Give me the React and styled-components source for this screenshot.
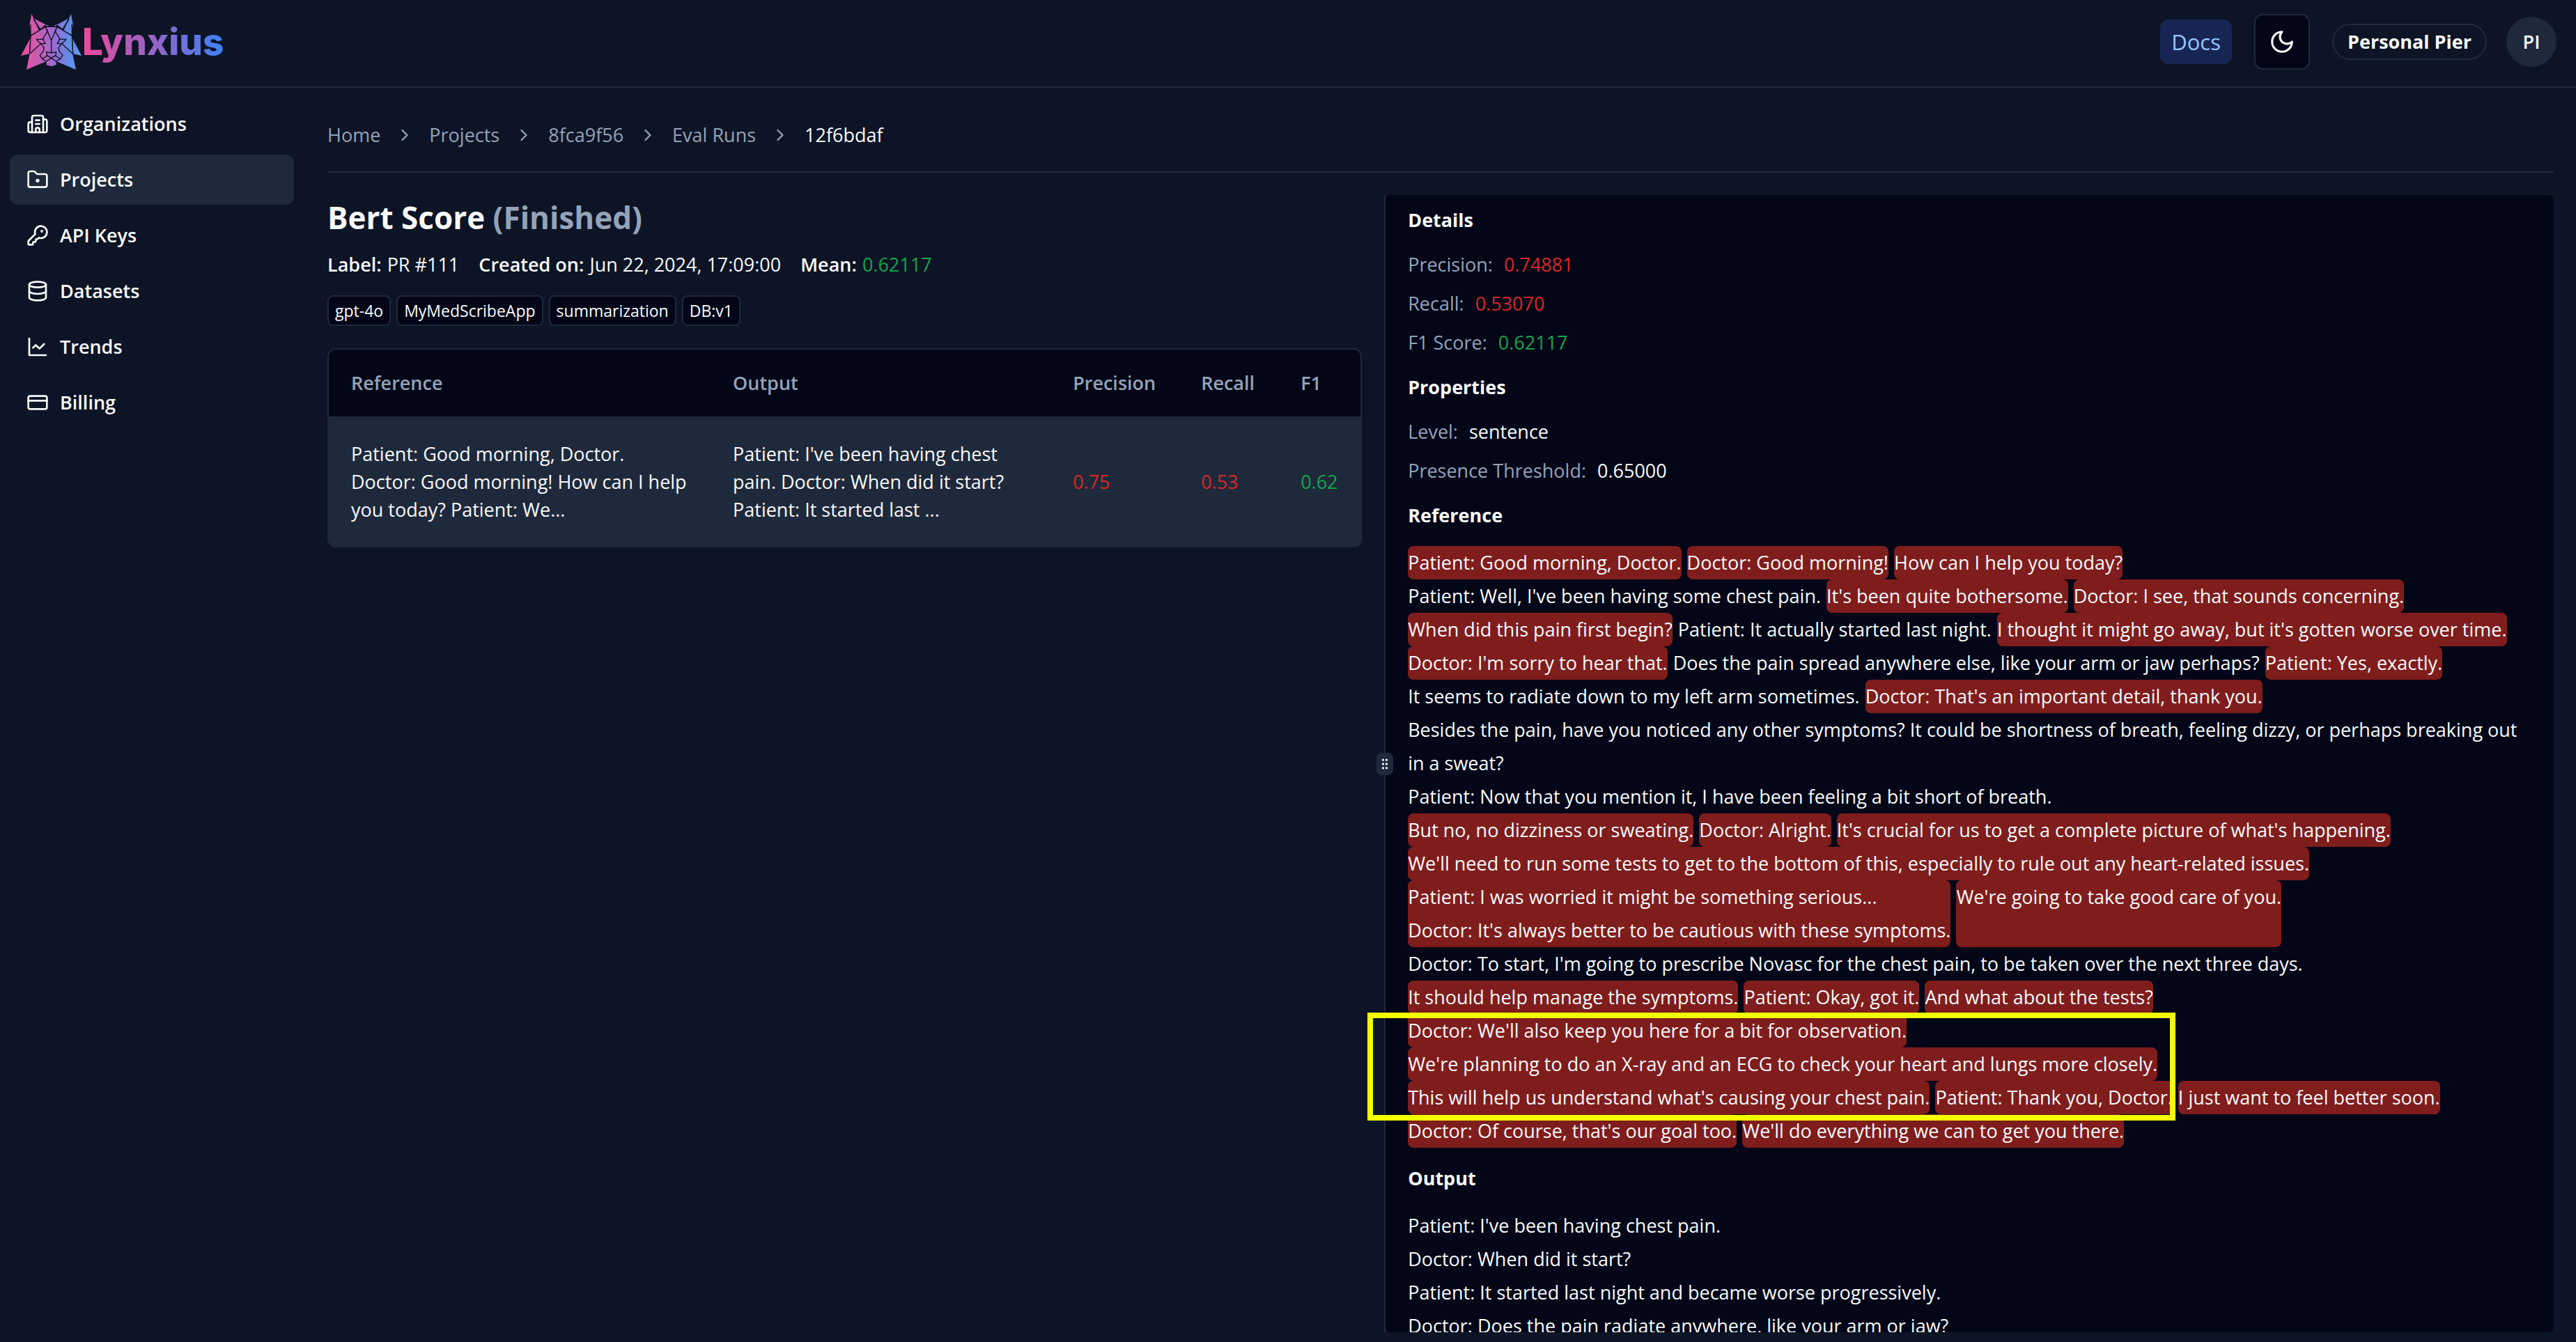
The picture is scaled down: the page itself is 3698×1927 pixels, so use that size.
import React from 'react';
import styled, { createGlobalStyle } from 'styled-components';
import {
  Building2,
  ChevronRight,
  CreditCard,
  Database,
  FolderDot,
  GripVertical,
  KeyRound,
} from 'lucide-react';

const colors = {
  page: '#0d1425',
  surface: '#020617',
  line: '#1e293b',
  text: '#f8fafc',
  muted: '#94a3b8',
  red: '#dc2626',
  green: '#16a34a',
  missing: '#7f1d1d',
};

const GlobalStyle = createGlobalStyle`
  *, *::before, *::after { box-sizing: border-box; }
  body {
    margin: 0;
    background: ${colors.page};
    color: ${colors.text};
    font-family: "Open Sans", "Noto Sans", sans-serif;
    font-size: 27px;
    line-height: 40px;
  }
  h1, h2, p, dl, dd, ul, ol { margin: 0; padding: 0; }
  ul, ol { list-style: none; }
  a { color: inherit; text-decoration: none; }
  button { font: inherit; color: inherit; cursor: pointer; }
`;

const Shell = styled.div`
  display: flex;
  flex-direction: column;
  height: 100vh;
`;

const Header = styled.header`
  display: flex;
  justify-content: space-between;
  align-items: center;
  padding: 20px 28px 24px 30px;
  border-bottom: 2px solid ${colors.line};
`;

const Brand = styled.a`
  display: flex;
  align-items: center;
`;

const Wordmark = styled.span`
  font: 800 53px/76px Inter, sans-serif;
  background: linear-gradient(90deg, #ec4899, #3b82f6);
  background-clip: text;
  color: transparent;
`;

const HeaderActions = styled.div`
  display: flex;
  align-items: center;
  gap: 32px;
`;

const DocsLink = styled.a`
  padding: 12px 16px;
  border-radius: 12px;
  background: #172554;
  color: #93c5fd;
  font-size: 31px;
`;

const ThemeButton = styled.button`
  display: grid;
  place-items: center;
  width: 80px;
  height: 80px;
  padding: 0;
  border: 2px solid ${colors.line};
  border-radius: 12px;
  background: ${colors.surface};
`;

const Account = styled.div`
  display: flex;
  align-items: center;
  gap: 28px;
`;

const AccountName = styled.span`
  padding: 4px 20px;
  border: 2px solid ${colors.line};
  border-radius: 26px;
  font-weight: 700;
`;

const Avatar = styled.button`
  width: 72px;
  height: 72px;
  padding: 0;
  border: 0;
  border-radius: 50%;
  background: ${colors.line};
  font-weight: 600;
`;

const Body = styled.div`
  display: flex;
  flex: 1;
  min-height: 0;
`;

const Sidebar = styled.nav`
  display: flex;
  flex-direction: column;
  gap: 8px;
  width: 438px;
  padding: 16px 16px 16px 14px;
`;

const NavItem = styled.a`
  display: flex;
  align-items: center;
  gap: 16px;
  padding: 16px 24px;
  border-radius: 12px;
  background: ${(p) => (p.$active ? colors.line : 'transparent')};
  font-weight: 600;
`;

const Main = styled.main`
  display: flex;
  flex-direction: column;
  flex: 1;
  min-width: 0;
  padding: 48px 32px 14px;
`;

const Breadcrumb = styled.ol`
  display: flex;
  align-items: center;
  gap: 21px;
  padding-bottom: 32px;
  margin-bottom: 32px;
  border-bottom: 2px solid ${colors.line};
  color: ${colors.muted};
`;

const Crumb = styled.li`
  display: flex;
  align-items: center;
  gap: 21px;
`;

const CurrentCrumb = styled.span`
  color: ${colors.text};
`;

const Split = styled.div`
  display: grid;
  grid-template-columns: 19fr 2px 21fr;
  flex: 1;
  min-height: 0;
`;

const RunPane = styled.section`
  padding-right: 32px;
`;

const Title = styled.h1`
  font-size: 44px;
  font-weight: 700;
  line-height: 64px;
`;

const Status = styled.span`
  color: ${colors.muted};
`;

const Meta = styled.dl`
  display: flex;
  gap: 28px;
  margin-top: 16px;
`;

const MetaPair = styled.div`
  display: flex;
  gap: 8px;

  dt { font-weight: 600; }
`;

const Value = styled.dd`
  color: ${(p) => colors[p.$tone] || colors.text};
`;

const Tags = styled.ul`
  display: flex;
  gap: 8px;
  margin: 24px 0 32px;
`;

const Tag = styled.li`
  padding: 0 9px;
  border: 2px solid ${colors.line};
  border-radius: 8px;
  background: ${colors.surface};
  font-size: 23px;
  font-weight: 500;
`;

const TableFrame = styled.div`
  overflow: hidden;
  border: 2px solid ${colors.line};
  border-radius: 12px;
`;

const Table = styled.table`
  width: 100%;
  table-layout: fixed;
  border-spacing: 0;
  text-align: left;
`;

const HeadCell = styled.th`
  width: ${(p) => p.$width};
  height: 98px;
  padding: 0 0 0 32px;
  border-bottom: 2px solid ${colors.line};
  background: ${colors.surface};
  color: ${colors.muted};
  font-weight: 600;
`;

const Cell = styled.td`
  padding: 32px 0 32px 32px;
  background: ${colors.line};
  color: ${(p) => colors[p.$tone] || colors.text};
  white-space: pre-line;
`;

const Divider = styled.div`
  position: relative;
  background: ${colors.line};
`;

const Handle = styled.button`
  position: absolute;
  top: 50%;
  left: 50%;
  display: grid;
  place-items: center;
  width: 24px;
  height: 32px;
  padding: 0;
  border: 0;
  border-radius: 8px;
  background: ${colors.line};
  transform: translate(-50%, -50%);
`;

const DetailPane = styled.section`
  display: flex;
  flex-direction: column;
  gap: 24px;
  overflow-y: auto;
  scrollbar-width: none;
  padding: 16px 32px;
  border-radius: 8px;
  background: ${colors.surface};
`;

const SectionTitle = styled.h2`
  font-size: 27px;
  font-weight: 700;
  line-height: 40px;
`;

const Facts = styled.dl`
  display: flex;
  flex-direction: column;
  gap: 16px;
`;

const Fact = styled.div`
  display: flex;
  gap: 16px;

  dt { color: ${colors.muted}; }
`;

const Passage = styled.div`
  display: flex;
  flex-wrap: wrap;
  column-gap: 8px;
  line-height: 48px;
  white-space: pre-line;
`;

const Sentence = styled.span`
  border-radius: 8px;
  background: ${(p) => (p.$missing ? colors.missing : 'transparent')};
`;

const Marker = styled.div`
  position: absolute;
  top: 1174px;
  left: -24px;
  width: 1160px;
  height: 155px;
  border: 8px solid #f2ff00;
  pointer-events: none;
`;

function LynxLogo() {
  return (
    <svg width="88" height="80" viewBox="12 18 264 240" aria-hidden="true">
      <defs>
        <linearGradient id="lynx" gradientUnits="userSpaceOnUse" x1="12" y1="0" x2="272" y2="0">
          <stop offset="0" stopColor="#f04e98" />
          <stop offset="0.35" stopColor="#c060b8" />
          <stop offset="0.6" stopColor="#8f6fd6" />
          <stop offset="0.8" stopColor="#5f8ee6" />
          <stop offset="1" stopColor="#6f94ff" />
        </linearGradient>
      </defs>
      <g fill="url(#lynx)">
        <path d="M58 18 50 62 55 108 90 90ZM228 18 236 62 231 108 196 90Z" />
        <path d="M70 38 118 64 94 84ZM216 38 168 64 192 84Z" />
        <path d="M54 112 94 88 118 73H168L192 88 232 112 234 188 249 258 164 222V238L143 244 122 238V222L36 258 50 188Z" />
        <path d="M52 124 12 198 48 190ZM234 124 273 198 238 190Z" />
        <path d="M115 63 132 68 124 71ZM171 63 154 68 162 71Z" />
      </g>
      <g fill="none" stroke={colors.page} strokeWidth="4" strokeLinejoin="round">
        <path d="M54 62V112L50 188M232 62V112L236 188" />
        <path d="M118 73 54 112M168 73 232 112M66 40 96 86M220 40 190 86" />
        <path d="M116 73H170M118 73 143 132 168 73M143 132V182" />
        <path d="M118 73 126 94 106 126M168 73 160 94 180 126" />
        <path d="M78 127 112 127M78 127 98 146H118L106 128M208 127 174 127M208 127 188 146H168L180 128" />
        <path d="M98 146 50 190M188 146 236 190" />
        <path d="M98 146 112 164 108 180 94 196 104 212 122 222 143 208 164 222 182 212 192 196 178 180 174 164 188 146" />
        <path d="M122 182 143 186 164 182 162 196 143 208 124 196ZM104 212 126 198M182 212 160 198" />
      </g>
    </svg>
  );
}

function MoonIcon() {
  return (
    <svg width="38" height="38" viewBox="0 0 24 24" fill="none" stroke="currentColor"
      strokeWidth="2" strokeLinecap="round" strokeLinejoin="round" aria-hidden="true">
      <path d="M12 3a6 6 0 0 0 9 9 9 9 0 1 1-9-9Z" />
    </svg>
  );
}

function TrendsIcon({ size }) {
  return (
    <svg width={size} height={size} viewBox="0 0 24 24" fill="none" stroke="currentColor"
      strokeWidth="2" strokeLinecap="round" strokeLinejoin="round" aria-hidden="true">
      <path d="M3 3v18h18" />
      <path d="m19 9-5 5-4-4-3 3" />
    </svg>
  );
}

const nav = [
  ['Organizations', Building2],
  ['Projects', FolderDot],
  ['API Keys', KeyRound],
  ['Datasets', Database],
  ['Trends', TrendsIcon],
  ['Billing', CreditCard],
];

const crumbs = ['Home', 'Projects', '8fca9f56', 'Eval Runs'];
const tags = ['gpt-4o', 'MyMedScribeApp', 'summarization', 'DB:v1'];

// Each entry is [sentence, missing from the output].
const reference = [
  ['Patient: Good morning, Doctor.', true],
  ['Doctor: Good morning!', true],
  ['How can I help you today?', true],
  ["Patient: Well, I've been having some chest pain.", false],
  ["It's been quite bothersome.", true],
  ['Doctor: I see, that sounds concerning.', true],
  ['When did this pain first begin?', true],
  ['Patient: It actually started last night.', false],
  ["I thought it might go away, but it's gotten worse over time.", true],
  ["Doctor: I'm sorry to hear that.", true],
  ['Does the pain spread anywhere else, like your arm or jaw perhaps?', false],
  ['Patient: Yes, exactly.', true],
  ['It seems to radiate down to my left arm sometimes.', false],
  ["Doctor: That's an important detail, thank you.", true],
  ['Besides the pain, have you noticed any other symptoms? It could be shortness of breath, feeling dizzy, or perhaps breaking out in a sweat?\nPatient: Now that you mention it, I have been feeling a bit short of breath.', false],
  ['But no, no dizziness or sweating.', true],
  ['Doctor: Alright.', true],
  ["It's crucial for us to get a complete picture of what's happening.", true],
  ["We'll need to run some tests to get to the bottom of this, especially to rule out any heart-related issues.", true],
  ["Patient: I was worried it might be something serious...\nDoctor: It's always better to be cautious with these symptoms.", true],
  ["We're going to take good care of you.", true],
  ["Doctor: To start, I'm going to prescribe Novasc for the chest pain, to be taken over the next three days.", false],
  ['It should help manage the symptoms.', true],
  ['Patient: Okay, got it.', true],
  ['And what about the tests?', true],
  ["Doctor: We'll also keep you here for a bit for observation.", true],
  ["We're planning to do an X-ray and an ECG to check your heart and lungs more closely.", true],
  ["This will help us understand what's causing your chest pain.", true],
  ['Patient: Thank you, Doctor.', true],
  ['I just want to feel better soon.', true],
  ["Doctor: Of course, that's our goal too.", true],
  ["We'll do everything we can to get you there.", true],
];

const output = [
  "Patient: I've been having chest pain.",
  'Doctor: When did it start?',
  'Patient: It started last night and became worse progressively.',
  'Doctor: Does the pain radiate anywhere, like your arm or jaw?',
].join('\n');

function FactRow({ label, value, tone }) {
  return (
    <Fact>
      <dt>{label}:</dt>
      <Value $tone={tone}>{value}</Value>
    </Fact>
  );
}

export default function App() {
  return (
    <Shell>
      <GlobalStyle />
      <Header>
        <Brand href="#">
          <LynxLogo />
          <Wordmark>Lynxius</Wordmark>
        </Brand>
        <HeaderActions>
          <DocsLink href="#docs">Docs</DocsLink>
          <ThemeButton type="button" aria-label="Toggle theme">
            <MoonIcon />
          </ThemeButton>
          <Account>
            <AccountName>Personal Pier</AccountName>
            <Avatar type="button">PI</Avatar>
          </Account>
        </HeaderActions>
      </Header>
      <Body>
        <Sidebar>
          {nav.map(([label, Icon]) => (
            <NavItem key={label} href="#" $active={label === 'Projects'}>
              <Icon size={32} />
              {label}
            </NavItem>
          ))}
        </Sidebar>
        <Main>
          <Breadcrumb>
            {crumbs.map((label) => (
              <Crumb key={label}>
                <a href="#">{label}</a>
                <ChevronRight size={28} />
              </Crumb>
            ))}
            <li>
              <CurrentCrumb aria-current="page">12f6bdaf</CurrentCrumb>
            </li>
          </Breadcrumb>
          <Split>
            <RunPane>
              <Title>
                Bert Score <Status>(Finished)</Status>
              </Title>
              <Meta>
                <MetaPair>
                  <dt>Label:</dt>
                  <Value>PR #111</Value>
                </MetaPair>
                <MetaPair>
                  <dt>Created on:</dt>
                  <Value>Jun 22, 2024, 17:09:00</Value>
                </MetaPair>
                <MetaPair>
                  <dt>Mean:</dt>
                  <Value $tone="green">0.62117</Value>
                </MetaPair>
              </Meta>
              <Tags>
                {tags.map((tag) => (
                  <Tag key={tag}>{tag}</Tag>
                ))}
              </Tags>
              <TableFrame>
                <Table>
                  <thead>
                    <tr>
                      <HeadCell $width="37%">Reference</HeadCell>
                      <HeadCell>Output</HeadCell>
                      <HeadCell $width="184px">Precision</HeadCell>
                      <HeadCell $width="143px">Recall</HeadCell>
                      <HeadCell $width="118px">F1</HeadCell>
                    </tr>
                  </thead>
                  <tbody>
                    <tr>
                      <Cell>{'Patient: Good morning, Doctor.\nDoctor: Good morning! How can I help\nyou today? Patient: We...'}</Cell>
                      <Cell>{"Patient: I've been having chest\npain. Doctor: When did it start?\nPatient: It started last ..."}</Cell>
                      <Cell $tone="red">0.75</Cell>
                      <Cell $tone="red">0.53</Cell>
                      <Cell $tone="green">0.62</Cell>
                    </tr>
                  </tbody>
                </Table>
              </TableFrame>
            </RunPane>
            <Divider>
              <Handle type="button" aria-label="Resize panels">
                <GripVertical size={20} />
              </Handle>
              <Marker />
            </Divider>
            <DetailPane>
              <SectionTitle>Details</SectionTitle>
              <Facts>
                <FactRow label="Precision" value="0.74881" tone="red" />
                <FactRow label="Recall" value="0.53070" tone="red" />
                <FactRow label="F1 Score" value="0.62117" tone="green" />
              </Facts>
              <SectionTitle>Properties</SectionTitle>
              <Facts>
                <FactRow label="Level" value="sentence" />
                <FactRow label="Presence Threshold" value="0.65000" />
              </Facts>
              <SectionTitle>Reference</SectionTitle>
              <Passage>
                {reference.map(([text, missing]) => (
                  <Sentence key={text} $missing={missing}>
                    {text}
                  </Sentence>
                ))}
              </Passage>
              <SectionTitle>Output</SectionTitle>
              <Passage>{output}</Passage>
            </DetailPane>
          </Split>
        </Main>
      </Body>
    </Shell>
  );
}
